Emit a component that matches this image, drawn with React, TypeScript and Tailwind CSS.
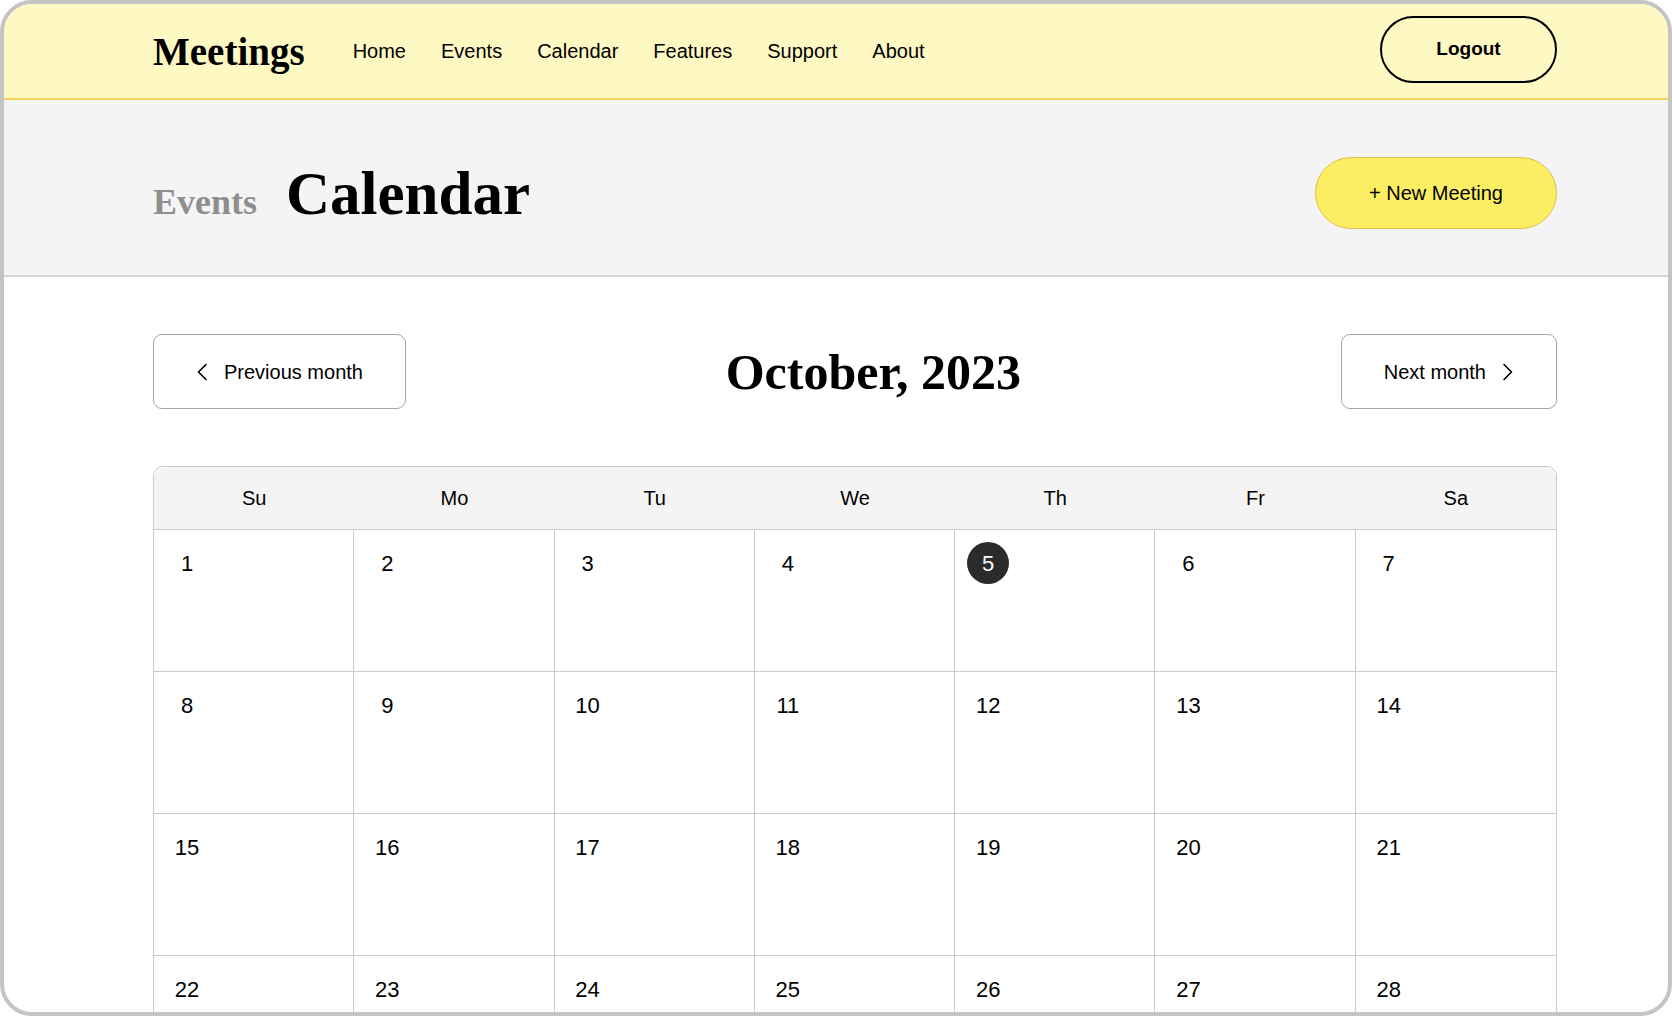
const sans = "font-['Liberation_Sans',Arial,Helvetica,sans-serif]";
const serif = "font-['Liberation_Serif','Times_New_Roman',serif]";

const navLinks = ["Home", "Events", "Calendar", "Features", "Support", "About"];
const weekDays = ["Su", "Mo", "Tu", "We", "Th", "Fr", "Sa"];
const today = 5;

function ChevronLeft() {
  return (
    <svg width="12" height="18" viewBox="0 0 12 18" fill="none" stroke="currentColor" strokeWidth="1.6" strokeLinecap="round" strokeLinejoin="round">
      <polyline points="10,1.5 2.5,9 10,16.5" />
    </svg>
  );
}

function ChevronRight() {
  return (
    <svg width="12" height="18" viewBox="0 0 12 18" fill="none" stroke="currentColor" strokeWidth="1.6" strokeLinecap="round" strokeLinejoin="round">
      <polyline points="2,1.5 9.5,9 2,16.5" />
    </svg>
  );
}

// October 2023 starts on a Sunday
function buildWeeks() {
  const cells: (number | null)[] = [];
  for (let d = 1; d <= 31; d++) cells.push(d);
  while (cells.length % 7 !== 0) cells.push(null);
  const weeks: (number | null)[][] = [];
  for (let i = 0; i < cells.length; i += 7) weeks.push(cells.slice(i, i + 7));
  return weeks;
}

export default function App() {
  const weeks = buildWeeks();

  return (
    <div className={`${sans} bg-white`}>
      <div className="h-[1016px] overflow-hidden rounded-[32px] border-4 border-[#c4c4c4] bg-white text-black">
        {/* top bar */}
        <header className="h-[96px] bg-[#fef9c3] border-b-2 border-[#f6d35b] flex items-center">
          <div className="ml-[149px] w-[1404px] flex items-center">
            <span className={`${serif} text-[39px] font-bold leading-none`}>Meetings</span>
            <nav className="ml-[48px] flex items-center gap-[35px] text-[20px]">
              {navLinks.map((l) => (
                <a key={l} href="#" className="hover:opacity-70">{l}</a>
              ))}
            </nav>
            <button className="ml-auto mb-[3px] w-[177px] h-[67px] rounded-full border-2 border-black text-[19px] font-bold">
              Logout
            </button>
          </div>
        </header>

        {/* page title */}
        <section className="h-[177px] pt-[11px] bg-[#f4f4f4] border-b-2 border-[#d6d6d6] flex items-center">
          <div className="ml-[149px] w-[1404px] flex items-center justify-between">
            <div className={`${serif} flex items-baseline gap-[29px] font-bold leading-none`}>
              <span className="text-[36px] text-[#8e8e8e]">Events</span>
              <h1 className="text-[61px]">Calendar</h1>
            </div>
            <button className="w-[242px] h-[72px] rounded-full bg-[#fcee62] border border-[#e2bd48] text-[20px]">
              + New Meeting
            </button>
          </div>
        </section>

        {/* calendar */}
        <main className="ml-[149px] w-[1404px] pt-[57px]">
          <div className="h-[75px] flex items-center justify-between">
            <button className="h-[75px] px-[42px] flex items-center gap-[16px] rounded-[9px] border-[1.5px] border-[#a6a6a6] text-[20px]">
              <ChevronLeft />
              Previous month
            </button>
            <h2 className={`${serif} text-[50px] font-bold leading-none`}>October, 2023</h2>
            <button className="h-[75px] px-[42px] flex items-center gap-[16px] rounded-[9px] border-[1.5px] border-[#a6a6a6] text-[20px]">
              Next month
              <ChevronRight />
            </button>
          </div>

          <div className="mt-[57px] border border-[#cbcbcb] rounded-t-[10px] overflow-hidden">
            <div className="grid grid-cols-7 h-[63px] bg-[#f4f4f4] border-b border-[#cbcbcb]">
              {weekDays.map((d) => (
                <div key={d} className="flex items-center justify-center text-[20px]">{d}</div>
              ))}
            </div>
            {weeks.map((week, wi) => (
              <div key={wi} className="grid grid-cols-7 h-[142px] border-b border-[#cbcbcb]">
                {week.map((day, di) => (
                  <div key={di} className={`p-3 ${di < 6 ? "border-r border-[#cbcbcb]" : ""}`}>
                    {day !== null && (
                      <div
                        className={`w-[42px] h-[42px] rounded-full flex items-center justify-center text-[22px] ${
                          day === today ? "bg-[#2b2b2b] text-white" : ""
                        }`}
                      >
                        {day}
                      </div>
                    )}
                  </div>
                ))}
              </div>
            ))}
          </div>
        </main>
      </div>
    </div>
  );
}
